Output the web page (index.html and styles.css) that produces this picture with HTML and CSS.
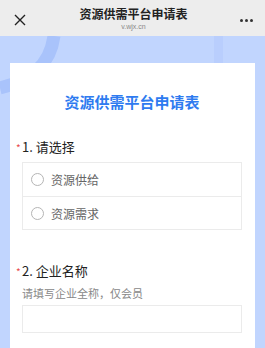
FILE: index.html
```html
<!DOCTYPE html>
<html lang="zh-CN">
<head>
    <meta charset="UTF-8">
    <meta name="viewport" content="width=device-width, initial-scale=1.0">
    <title>资源供需平台申请表</title>
    <link rel="stylesheet" href="styles.css">
</head>
<body>
    <div class="topbar">
        <a href="javascript:;" class="close">
            <svg width="12" height="12" viewBox="0 0 12 12"><path d="M1 1L11 11M11 1L1 11" stroke="#222" stroke-width="1.4" fill="none"/></svg>
        </a>
        <div class="topbar-title">
            <h1>资源供需平台申请表</h1>
            <p>v.wjx.cn</p>
        </div>
        <a href="javascript:;" class="more">
            <i></i><i></i><i></i>
        </a>
    </div>
    <div class="page">
        <!-- 背景装饰 -->
        <svg class="deco" width="265" height="120" viewBox="0 0 265 120">
            <path d="M54 0 C50 30 30 45 0 52" stroke="#a9c3fb" stroke-width="13" fill="none"/>
            <rect x="214" y="0" width="9" height="120" fill="#b9cefd"/>
        </svg>
        <div class="card">
            <h2 class="form-title">资源供需平台申请表</h2>

            <div class="question">
                <div class="q-label"><span class="req">*</span>1. 请选择</div>
                <ul class="options">
                    <li><span class="radio"></span>资源供给</li>
                    <li><span class="radio"></span>资源需求</li>
                </ul>
            </div>

            <div class="question q2">
                <div class="q-label"><span class="req">*</span>2. 企业名称</div>
                <p class="q-desc">请填写企业全称，仅会员</p>
                <div class="text-input"></div>
            </div>
        </div>
    </div>
</body>
</html>
```

FILE: styles.css
```css
*{
    padding: 0;
    margin: 0;
    box-sizing: border-box;
}
ul,ol{
    list-style: none;
}
a{
    text-decoration: none;
}
body{
    width: 265px;
    height: 348px;
    overflow: hidden;
    font-family: "Noto Sans CJK SC", "Noto Sans", sans-serif;
    background-color: #c1d5fe;
}
.topbar{
    height: 36px;
    background-color: #ededed;
    display: flex;
    align-items: center;
    padding: 0 12px 0 13px;
}
.topbar .close{
    width: 14px;
    height: 14px;
    display: flex;
    align-items: center;
    justify-content: center;
    margin-top: 4px;
}
.topbar-title{
    flex: 1;
    text-align: center;
    padding-top: 1px;
}
.topbar-title h1{
    font-size: 12px;
    line-height: 16px;
    font-weight: 600;
    color: #222;
}
.topbar-title p{
    font-size: 7px;
    line-height: 9px;
    color: #888;
    font-family: "Liberation Sans", sans-serif;
}
.topbar .more{
    display: flex;
    gap: 2px;
    margin-top: 5px;
}
.topbar .more i{
    width: 3px;
    height: 3px;
    border-radius: 50%;
    background-color: #333;
}
.page{
    position: relative;
    padding: 27px 10px 0;
}
.page .deco{
    position: absolute;
    left: 0;
    top: 0;
}
.card{
    position: relative;
    background-color: #fff;
    height: 300px;
    padding: 29px 13px 0 12px;
}
.form-title{
    font-size: 15px;
    line-height: 20px;
    font-weight: 600;
    color: #2e7bf0;
    text-align: center;
}
.question{
    margin-top: 26px;
}
.question.q2{
    margin-top: 32px;
}
.q-label{
    position: relative;
    font-size: 13px;
    line-height: 18px;
    color: #222;
}
.q-label .req{
    position: absolute;
    left: -6px;
    top: 3px;
    color: #e94b4b;
    font-size: 10px;
    line-height: 14px;
}
.options{
    margin-top: 6px;
    border: 1px solid #ebebeb;
}
.options li{
    height: 33px;
    display: flex;
    align-items: center;
    padding-left: 8px;
    font-size: 12px;
    color: #666;
}
.options li + li{
    border-top: 1px solid #ebebeb;
}
.options .radio{
    width: 13px;
    height: 13px;
    border: 1px solid #b5b5b5;
    border-radius: 50%;
    margin-right: 7px;
}
.q-desc{
    margin-top: 5px;
    font-size: 11px;
    line-height: 16px;
    color: #888;
}
.text-input{
    margin-top: 4px;
    height: 28px;
    border: 1px solid #ebebeb;
}
```
